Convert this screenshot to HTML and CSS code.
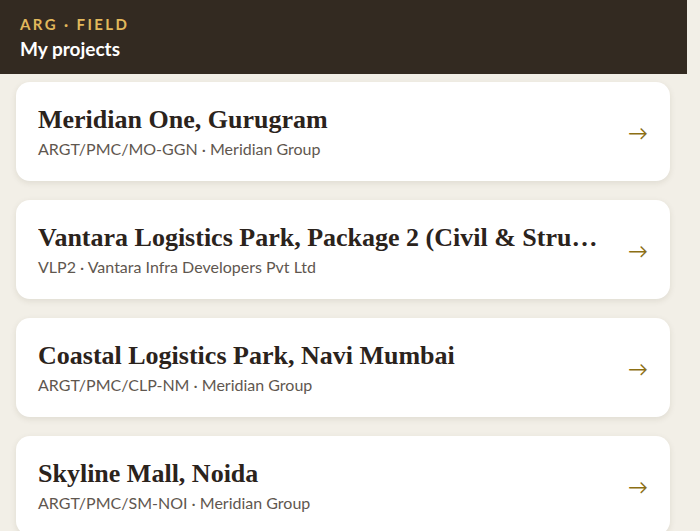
FILE: index.html
```html
<!DOCTYPE html>
<html lang="en">
<head>
    <meta charset="UTF-8">
    <meta name="viewport" content="width=device-width, initial-scale=1.0">
    <title>My projects</title>
    <link rel="stylesheet" href="styles.css">
</head>
<body>
    <div class="app">
        <header class="topbar">
            <div class="brand">ARG · FIELD</div>
            <h1>My projects</h1>
        </header>
        <main class="project-list">
            <a class="project-card" href="#">
                <div class="project-info">
                    <h2>Meridian One, Gurugram</h2>
                    <p>ARGT/PMC/MO-GGN · Meridian Group</p>
                </div>
                <span class="arrow">→</span>
            </a>
            <a class="project-card" href="#">
                <div class="project-info">
                    <h2>Vantara Logistics Park, Package 2 (Civil &amp; Structural Works)</h2>
                    <p>VLP2 · Vantara Infra Developers Pvt Ltd</p>
                </div>
                <span class="arrow">→</span>
            </a>
            <a class="project-card" href="#">
                <div class="project-info">
                    <h2>Coastal Logistics Park, Navi Mumbai</h2>
                    <p>ARGT/PMC/CLP-NM · Meridian Group</p>
                </div>
                <span class="arrow">→</span>
            </a>
            <a class="project-card" href="#">
                <div class="project-info">
                    <h2>Skyline Mall, Noida</h2>
                    <p>ARGT/PMC/SM-NOI · Meridian Group</p>
                </div>
                <span class="arrow">→</span>
            </a>
        </main>
    </div>
</body>
</html>
```

FILE: styles.css
```css
html, body {
    margin: 0;
    height: 100%;
}

body {
    font-family: Lato, "Open Sans", sans-serif;
    background-color: #f2efe7;
}

.app {
    height: 100vh;
    margin-right: 13px;
    overflow-y: auto;
    scrollbar-width: none;
}

.topbar {
    background: #332a21;
    height: 74px;
    box-sizing: border-box;
    padding: 14px 20px 0;
}

.brand {
    color: #e2b95c;
    font-weight: bold;
    font-size: 15px;
    letter-spacing: 2.4px;
    line-height: 20px;
}

.topbar h1 {
    margin: 3px 0 0;
    color: #ffffff;
    font-size: 19px;
    font-weight: bold;
    line-height: 24px;
}

.project-list {
    padding: 8px 17px 20px 16px;
    display: flex;
    flex-direction: column;
    gap: 19px;
}

.project-card {
    display: flex;
    align-items: center;
    gap: 20px;
    height: 99px;
    box-sizing: border-box;
    padding: 0 22px;
    background: #ffffff;
    border-radius: 14px;
    box-shadow: 0 2px 6px rgba(60, 45, 20, 0.1);
    text-decoration: none;
}

.project-info {
    flex: 1;
    min-width: 0;
}

.project-info h2 {
    margin: 0;
    font-family: "Liberation Serif", "DejaVu Serif", serif;
    font-size: 26px;
    font-weight: bold;
    color: #2b231c;
    line-height: 30px;
    white-space: nowrap;
    overflow: hidden;
    text-overflow: ellipsis;
}

.project-info p {
    margin: 4px 0 0;
    font-size: 16px;
    color: #5f574f;
    line-height: 20px;
}

.arrow {
    color: #8c6f14;
    font-size: 20px;
}
```
